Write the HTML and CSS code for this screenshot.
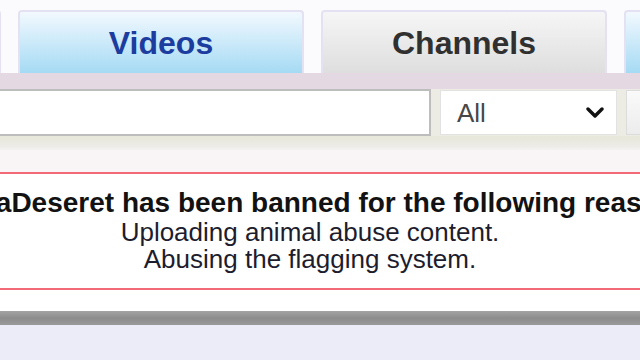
FILE: index.html
```html
<!DOCTYPE html>
<html lang="en">
<head>
  <meta charset="UTF-8">
  <meta name="viewport" content="width=device-width, initial-scale=1.0">
  <title>Channel banned</title>
  <link rel="stylesheet" href="styles.css">
</head>
<body>
  <div class="page">
    <header class="top">
      <nav class="tabs">
        <a class="tab tab-blue" href="#"></a>
        <a class="tab tab-active" href="#">Videos</a>
        <a class="tab" href="#">Channels</a>
        <a class="tab tab-blue" href="#"></a>
      </nav>
      <div class="tab-floor"></div>
    </header>

    <form class="search-bar">
      <input class="search-input" type="text" aria-label="Search">
      <div class="search-filter">
        <span>All</span>
        <svg class="chevron" width="18" height="12" viewBox="0 0 18 12">
          <path d="M2 2 L9 9 L16 2" fill="none" stroke="#111" stroke-width="3.4" stroke-linecap="round" stroke-linejoin="round"/>
        </svg>
      </div>
      <button class="search-btn" type="button"></button>
    </form>
    <div class="search-shadow"></div>

    <main class="content">
      <section class="ban-notice">
        <p class="ban-title">KenyaDeseret has been banned for the following reasons:</p>
        <p class="ban-reason">Uploading animal abuse content.</p>
        <p class="ban-reason">Abusing the flagging system.</p>
      </section>
    </main>

    <div class="footer-bar"></div>
    <footer class="footer"></footer>
  </div>
</body>
</html>
```

FILE: styles.css
```css
:root {
  --tab-blue-top: #f2f9fe;
  --tab-blue-bottom: #a5daf4;
  --tab-grey-top: #f6f6f6;
  --tab-grey-bottom: #dedede;
  --tab-border: #e4e2f2;
  --floor: #e4d9e3;
  --ban-red: #f26a78;
  --lavender: #ececf9;
}

html, body {
  margin: 0;
  padding: 0;
  overflow: hidden;
}

body {
  font-family: 'Liberation Sans', Arial, sans-serif;
  background-color: var(--lavender);
  width: 640px;
  height: 360px;
}

.page {
  width: 640px;
}

.top {
  background-color: #fbfafd;
  padding-top: 10px;
}

.tabs {
  display: flex;
  gap: 17px;
  margin-left: -285px;
}

.tab {
  flex: 0 0 286px;
  height: 63px;
  box-sizing: border-box;
  border: 2px solid var(--tab-border);
  border-bottom: none;
  border-radius: 4px 4px 0 0;
  background: linear-gradient(to bottom, var(--tab-grey-top), var(--tab-grey-bottom));
  display: flex;
  align-items: center;
  justify-content: center;
  font-size: 32px;
  font-weight: bold;
  color: #303030;
  text-decoration: none;
  padding-top: 2px;
}

.tab-blue,
.tab-active {
  background: linear-gradient(to bottom, var(--tab-blue-top), var(--tab-blue-bottom));
}

.tab-active {
  color: #1c3d9f;
}

.tab-floor {
  height: 16px;
  background-color: var(--floor);
}

.search-bar {
  display: flex;
  gap: 9px;
  height: 47px;
  margin: 0;
  background-color: #ecebe4;
}

.search-bar > * {
  flex-shrink: 0;
}

.search-input {
  width: 451px;
  margin-left: -20px;
  box-sizing: border-box;
  border: 2px solid #bdbdbd;
  background: #fff;
  padding: 0;
}

.search-filter {
  width: 177px;
  box-sizing: border-box;
  margin: 1px 0;
  border: 1px solid #e2e2e2;
  background: #fff;
  display: flex;
  align-items: center;
  justify-content: space-between;
  padding: 2px 12px 0 16px;
  font-size: 26px;
  color: #474747;
}

.chevron {
  margin-top: -2px;
}

.search-btn {
  width: 60px;
  margin: 1px 0;
  border: 1px solid #dcdcdc;
  background: linear-gradient(to bottom, #fafafa, #ececec);
}

.search-shadow {
  height: 14px;
  background: linear-gradient(to bottom, #e7e7da, #ecebe6 70%, #f4f1f3);
}

.content {
  background: linear-gradient(to bottom, #f9f5f6 0 22px, #fff 22px);
  padding: 22px 0 21px;
}

.ban-notice {
  margin: 0 -10px 0 -30px;
  padding: 14px 0 15px;
  border-top: 2px solid var(--ban-red);
  border-bottom: 2px solid var(--ban-red);
  background-color: #fff;
  display: flex;
  flex-direction: column;
  align-items: center;
}

.ban-notice p {
  margin: 0;
  white-space: nowrap;
}

.ban-title {
  font-size: 28px;
  font-weight: bold;
  line-height: 30px;
  color: #121212;
  margin-bottom: 1px !important;
  position: relative;
  left: 4px;
}

.ban-reason {
  font-size: 26px;
  line-height: 27px;
  color: #1d1d2e;
}

.footer-bar {
  height: 14px;
  background: linear-gradient(to bottom, #a4a4a4, #8c8c8c 50%, #9a9a9a);
}

.footer {
  height: 40px;
  background-color: var(--lavender);
}
```
